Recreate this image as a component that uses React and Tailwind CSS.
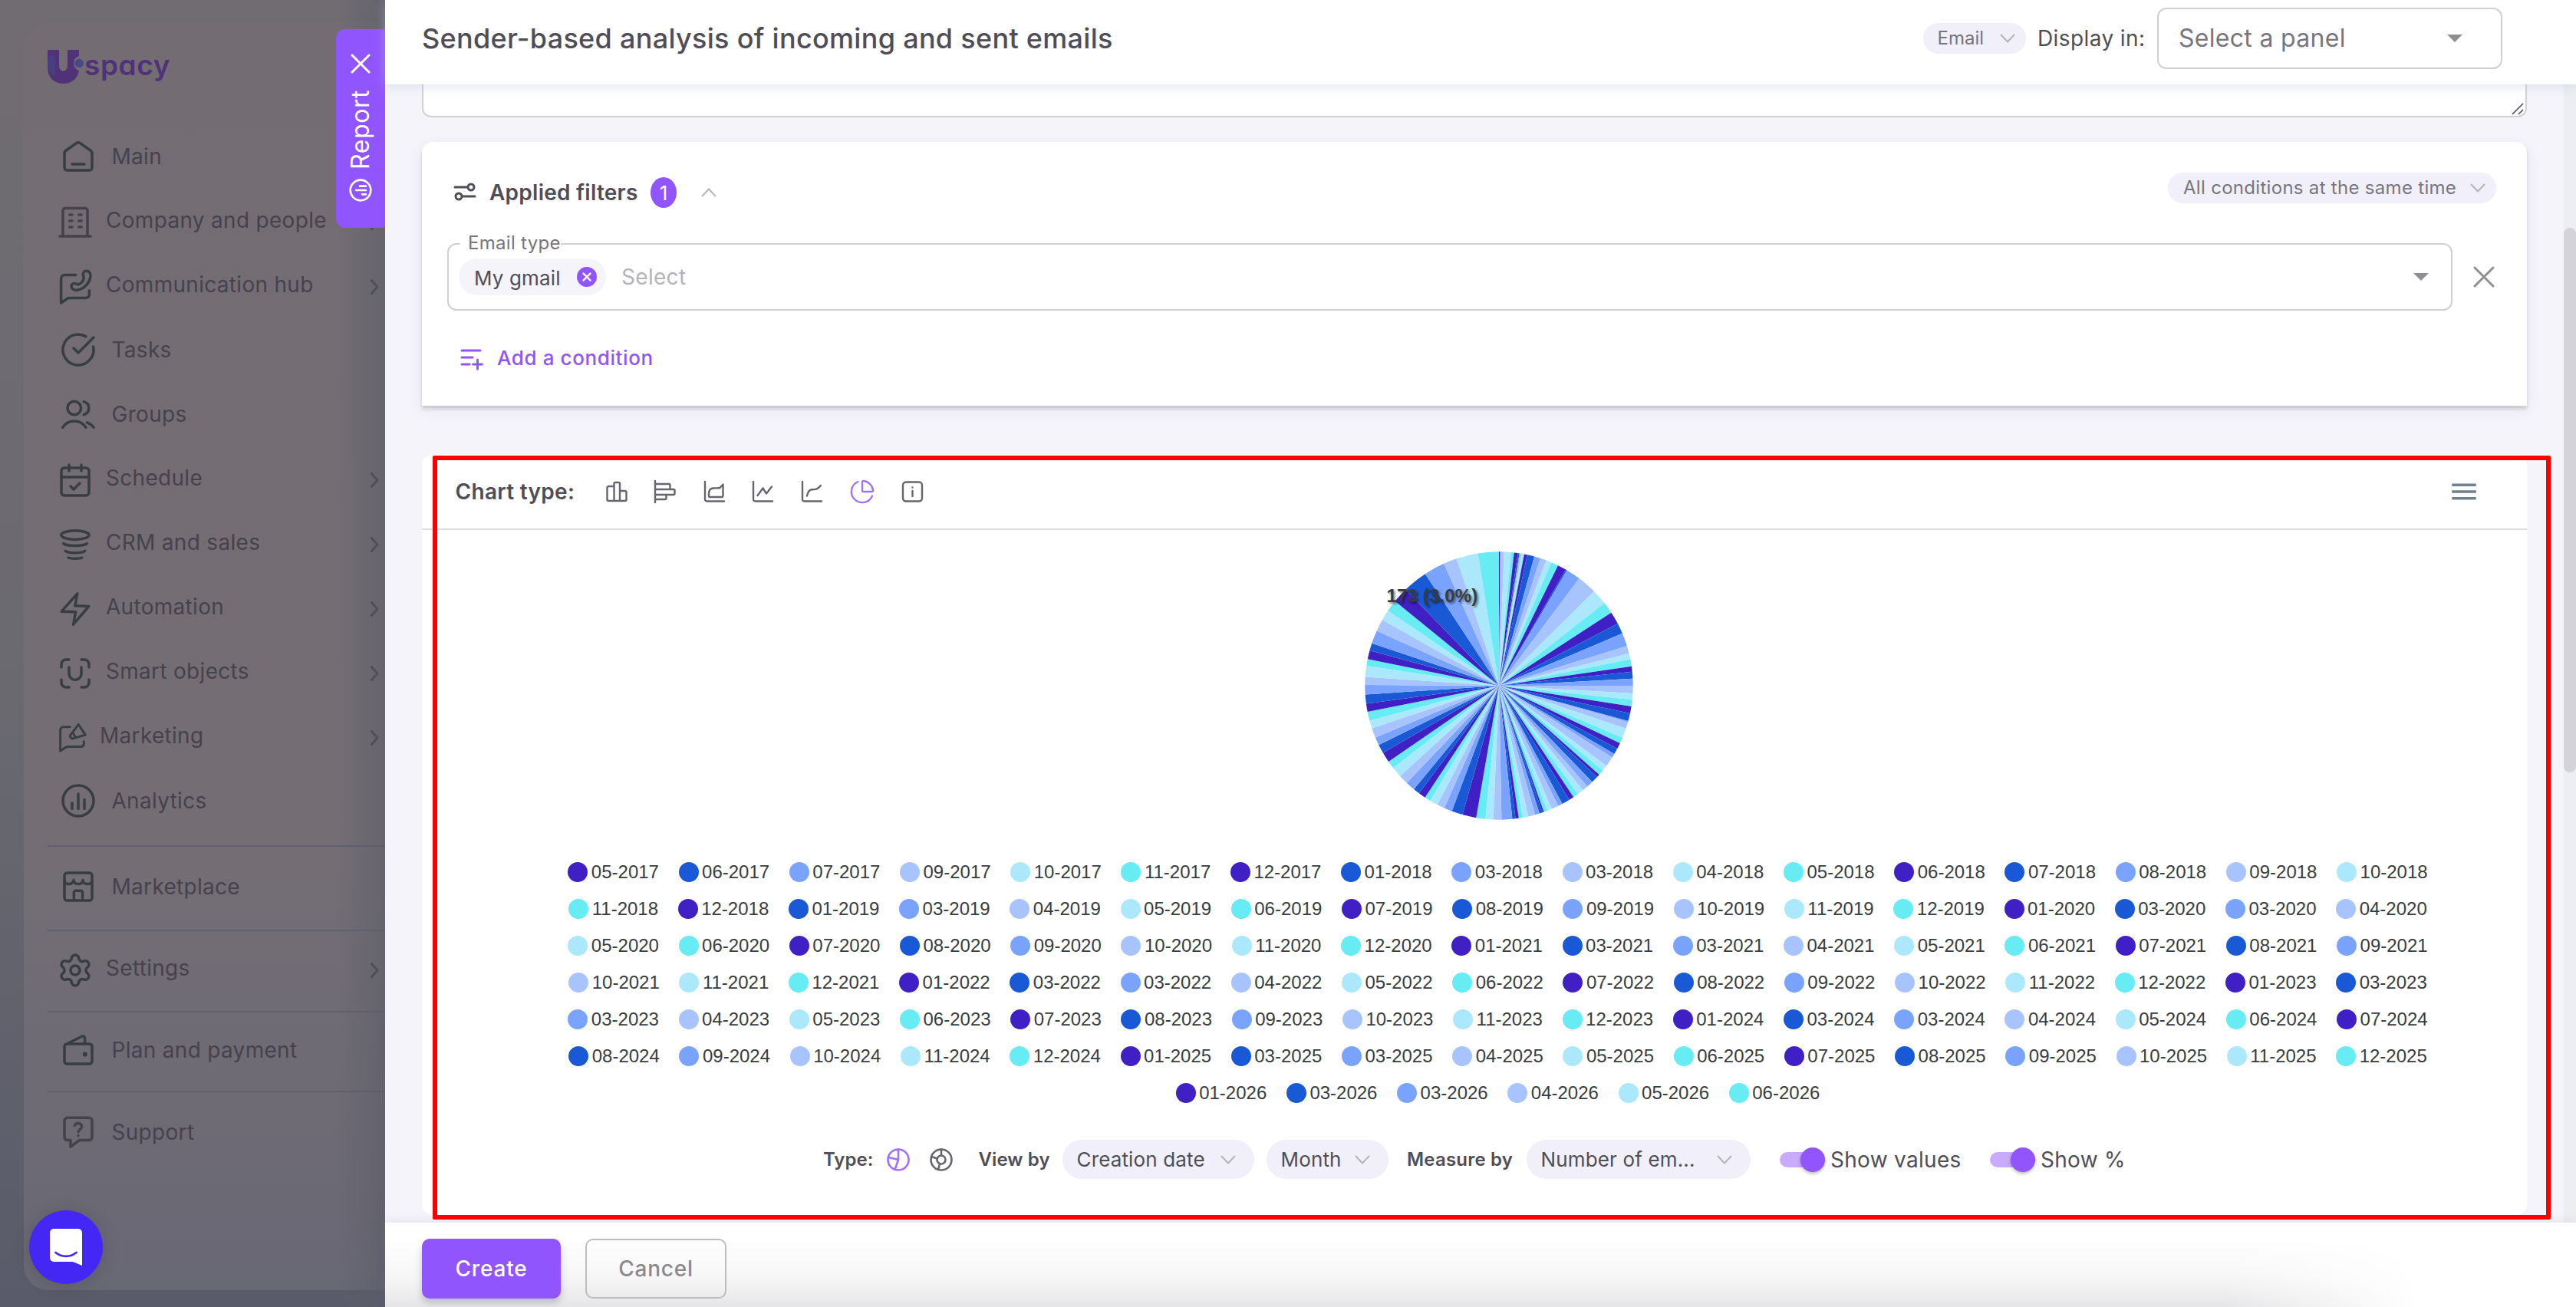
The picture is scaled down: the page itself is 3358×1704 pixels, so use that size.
import { CalendarCheck, ChartPie, CircleCheckBig, Settings } from "lucide-react"

const COLORS = ["#4020c4", "#1a59d6", "#7aa3ff", "#a8c4ff", "#abe8fc", "#66ecf2"]

const PERIODS = `
05-2017 06-2017 07-2017 09-2017 10-2017 11-2017 12-2017 01-2018 03-2018 03-2018 04-2018 05-2018 06-2018 07-2018 08-2018 09-2018 10-2018
11-2018 12-2018 01-2019 03-2019 04-2019 05-2019 06-2019 07-2019 08-2019 09-2019 10-2019 11-2019 12-2019 01-2020 03-2020 03-2020 04-2020
05-2020 06-2020 07-2020 08-2020 09-2020 10-2020 11-2020 12-2020 01-2021 03-2021 03-2021 04-2021 05-2021 06-2021 07-2021 08-2021 09-2021
10-2021 11-2021 12-2021 01-2022 03-2022 03-2022 04-2022 05-2022 06-2022 07-2022 08-2022 09-2022 10-2022 11-2022 12-2022 01-2023 03-2023
03-2023 04-2023 05-2023 06-2023 07-2023 08-2023 09-2023 10-2023 11-2023 12-2023 01-2024 03-2024 03-2024 04-2024 05-2024 06-2024 07-2024
08-2024 09-2024 10-2024 11-2024 12-2024 01-2025 03-2025 03-2025 04-2025 05-2025 06-2025 07-2025 08-2025 09-2025 10-2025 11-2025 12-2025
01-2026 03-2026 03-2026 04-2026 05-2026 06-2026`.trim().split(/\s+/)

// end angle of every slice, clockwise from 12 o'clock
const ANGLES = [
  0.5, 0.53, 0.6, 2.2, 5.15, 6.5,
  8.1, 8.8, 9.1, 9.7, 10.5, 10.9,
  12.2, 15.3, 18, 20.7, 23, 26.15,
  29.9, 30.5, 36.8, 45.2, 51.9, 56.95,
  62.4, 67, 72.8, 76.1, 78.6, 81.7,
  84, 87, 90, 93.3, 96, 98.9,
  101.9, 105.3, 105.8, 108.7, 112.8, 115.4,
  118, 120.6, 122.4, 126.7, 129.2, 131.6,
  132.9, 135.9, 138.8, 141.3, 143.9, 146.2,
  148.3, 151.8, 153.8, 156.8, 158.8, 160.4,
  161.1, 162.4, 164.4, 167.4, 169.8, 171.5,
  172.9, 174.3, 178.9, 182.4, 185.8, 189.8,
  195.8, 200.6, 204.1, 207.4, 210.9, 213.5,
  216.6, 219.4, 223.5, 227.6, 232.1, 235.5,
  239.9, 243.8, 247.3, 251.5, 254.9, 258.8,
  262.3, 266.2, 270.3, 273.8, 278.6, 281.5,
  285.3, 288.4, 294.2, 299.5, 304, 309.1,
  315.8, 326.6, 335.7, 341.6, 351, 360,
]

function Glyph({ size = 48, box = 24, sw = 1.75, className = "", children }) {
  return (
    <svg
      width={size}
      height={size}
      viewBox={`0 0 ${box} ${box}`}
      fill="none"
      stroke="currentColor"
      strokeWidth={sw}
      strokeLinecap="round"
      strokeLinejoin="round"
      className={`shrink-0 ${className}`}
    >
      {children}
    </svg>
  )
}

const Home = () => (
  <Glyph>
    <path d="M3 10.2c0-.9.4-1.7 1.1-2.2l6.7-4.7c.7-.5 1.7-.5 2.4 0L19.9 8c.7.5 1.1 1.3 1.1 2.2v9a1.8 1.8 0 0 1-1.8 1.8H4.8A1.8 1.8 0 0 1 3 19.2z" />
    <path d="M8 17h8" />
  </Glyph>
)

const Building = () => (
  <Glyph className="text-[#45424c]">
    <path d="M2 21h20M4 21V4.3a1.5 1.5 0 0 1 1.5-1.5h13a1.5 1.5 0 0 1 1.5 1.5V21" />
    <path d="M8.3 7h1.7M14.4 7h1.7M8.3 11h1.7M14.4 11h1.7M8.3 15h1.7M14.4 15h1.7" />
  </Glyph>
)

const Hub = () => (
  <Glyph>
    <path d="M12.3 4.3H5.2a2.4 2.4 0 0 0-2.4 2.4v15.8l3.8-2.7c.5-.4.9-.5 1.5-.5h10.7c1.4 0 2.4-1 2.4-2.4v-2.5" />
    <path d="M17.4 5.2c-.8-1.8.2-3.6 2-3.6 2 .1 2.9 1.9 2.5 4.2-.7 3.8-4.2 7.5-8.1 8.2-2.2.4-4-.5-4.3-2.1-.3-1.6 1.5-2.6 2.9-2 .7.4 1.1.7 1.7.5 1.5-.5 3-2 3.4-3.6.1-.6.1-1-.1-1.6z" />
  </Glyph>
)

const People = () => (
  <Glyph>
    <circle cx="9.4" cy="8" r="4.4" />
    <path d="M15.6 3.8c2 .5 3.3 2.1 3.3 4.2s-1.3 3.8-3.3 4.3" />
    <path d="M1.8 20.6c1.8-2.7 4.5-4.1 7.6-4.1s5.8 1.4 7.6 4.1M17.7 17.4c1.8.6 3.3 1.7 4.4 3.2" />
  </Glyph>
)

const Funnel = () => (
  <Glyph>
    <ellipse cx="12" cy="5.8" rx="9.1" ry="2.9" />
    <path d="M4.3 11.3c2.2 1.9 13.2 1.9 15.4 0M5.7 16.2c2 1.6 10.6 1.6 12.6 0M7.6 20.5c1.5.8 7.3.8 8.8 0" />
  </Glyph>
)

const Bolt = () => (
  <Glyph>
    <path d="M13.4 1.9 3.1 13.6l9.2.3-1.5 8.2L20.9 10.2l-9-.3z" />
  </Glyph>
)

const SmartU = () => (
  <Glyph>
    <path d="M3 8V6a3 3 0 0 1 3-3h2M16 3h2a3 3 0 0 1 3 3v2M21 16v2a3 3 0 0 1-3 3h-2M8 21H6a3 3 0 0 1-3-3v-2" />
    <path d="M8 8v4.2a4 4 0 0 0 8 0V8" />
  </Glyph>
)

const Promo = () => (
  <Glyph size={40}>
    <path d="M10.3 3.4H5.2a2.4 2.4 0 0 0-2.4 2.4v16.5l4-2.8c.5-.4 1-.6 1.6-.6h10.4c1.5 0 2.4-1 2.4-2.4v-1.7" />
    <path d="M17 1.5 22.4 9.7l-9 2.5a1.9 1.9 0 0 1-2.3-3zM12.8 8.2l1.7 3.3" />
  </Glyph>
)

const Bars = ({ size = 48, sw = 1.75, className = "" }) => (
  <Glyph size={size} sw={sw} className={className}>
    <circle cx="12" cy="12" r="10" />
    <path d="M8 13.5v3.7M12 7.5v9.7M16 11.3v5.9" />
  </Glyph>
)

const Shop = () => (
  <Glyph>
    <rect x="3" y="3" width="18" height="18" rx="1.8" />
    <path d="M3 8c.3 1.5 1.4 2.3 2.9 2.3S9 9.2 9 7.6c0 1.6 1.2 2.7 3 2.7s3-1.1 3-2.7c0 1.6 1.4 2.7 3.1 2.7S20.7 9.5 21 8" />
    <path d="M9.2 20.8V15.8a1.2 1.2 0 0 1 1.2-1.2h3.2a1.2 1.2 0 0 1 1.2 1.2v5" />
  </Glyph>
)

const Wallet = () => (
  <Glyph>
    <rect x="3" y="8" width="18" height="13" rx="1.8" />
    <path d="M4.5 8 14.3 3.1c1-.5 2 .1 2 1.2V8" />
    <circle cx="16.4" cy="14.7" r="0.9" fill="currentColor" strokeWidth="1.2" />
  </Glyph>
)

const Help = () => (
  <Glyph className="text-[#45424c]">
    <path d="M5 2.6h14a2 2 0 0 1 2 2v10.7a2 2 0 0 1-2 2h-6.3L7 21.5V17.3H5a2 2 0 0 1-2-2V4.6a2 2 0 0 1 2-2z" />
    <path d="M9.7 7.7a2.4 2.4 0 0 1 4.6.8c0 1.6-2.3 2-2.3 3.4M12 14.3v.1" />
  </Glyph>
)

const lucide = { size: 48, strokeWidth: 1.75, className: "shrink-0" }

const NAV = [
  { label: "Main", icon: <Home /> },
  { label: "Company and people", icon: <Building />, sub: true },
  { label: "Communication hub", icon: <Hub />, sub: true },
  { label: "Tasks", icon: <CircleCheckBig {...lucide} /> },
  { label: "Groups", icon: <People /> },
  { label: "Schedule", icon: <CalendarCheck {...lucide} />, sub: true },
  { label: "CRM and sales", icon: <Funnel />, sub: true },
  { label: "Automation", icon: <Bolt />, sub: true },
  { label: "Smart objects", icon: <SmartU />, sub: true },
  { label: "Marketing", icon: <Promo />, sub: true },
  { label: "Analytics", icon: <Bars /> },
]

function NavItem({ item, className }) {
  const { label, icon, sub } = item
  return (
    <div className={`flex items-center ${sub ? "pl-[74px]" : "pl-[78px]"} pr-2 ${className}`}>
      <span className={`flex text-[#373e42] ${sub ? "pt-1" : ""}`}>{icon}</span>
      <span className={`text-[28px] leading-[34px] tracking-[0.3px] text-[#45424c] ${sub ? "-mt-[2px] pl-[16px]" : "pl-[19.5px]"}`}>
        {label}
      </span>
      {sub && (
        <svg width="12" height="22" viewBox="0 0 12 22" className="ml-auto mt-1" fill="none" stroke="#45424c" strokeWidth="3">
          <path d="M1.5 1.5 10 11 1.5 20.5" />
        </svg>
      )}
    </div>
  )
}

const Line = () => <div className="ml-[62px] h-[2px] bg-[#5f6070]" />

function Sidebar() {
  return (
    <aside className="relative h-full w-[502px] shrink-0 overflow-hidden bg-linear-to-b from-[#706c72] via-[#6b6a70] to-[#595b6a] pt-[30px] pb-[22px]">
      <div className="flex h-full">
        <div className="ml-[31px] h-full w-full rounded-l-[32px] bg-linear-to-b from-[#736d73] via-[#746e74] via-65% to-[#696875]">
          <div className="-ml-[31px] flex flex-col">
            <div className="flex h-[132px] items-start pl-[62px] pt-[35px]">
              <svg width="50" height="46" viewBox="0 0 50 46" className="shrink-0">
                <path d="M0 0h15v20c0 10 11 10 11 0V0h15v8a10 10 0 0 0 0 19c-2 11-10 17-20.5 17C8.5 44 0 36 0 23z" fill="#4f3277" />
                <path d="M0 12c0-6 10-6 10 0v22C3 31 0 27 0 22z" fill="#46427f" opacity=".8" />
                <circle cx="41" cy="17.5" r="5.8" fill="#474a85" />
              </svg>
              <span className="-mt-[2px] -ml-[2px] text-[37px] leading-[44px] font-semibold tracking-[0.6px] text-[#4f3277] [font-feature-settings:'cv11']">spacy</span>
            </div>
            {NAV.map((item) => (
              <NavItem key={item.label} item={item} className="h-[84px]" />
            ))}
            <div className="h-4" />
            <Line />
            <NavItem item={{ label: "Marketplace", icon: <Shop /> }} className="mb-1 h-[104px]" />
            <Line />
            <NavItem item={{ label: "Settings", icon: <Settings {...lucide} />, sub: true }} className="mb-[6px] h-[98px]" />
            <Line />
            <NavItem item={{ label: "Plan and payment", icon: <Wallet /> }} className="mb-1 h-[98px]" />
            <Line />
            <NavItem item={{ label: "Support", icon: <Help /> }} className="h-[104px]" />
          </div>
        </div>
      </div>
      <div className="absolute inset-y-0 right-0 w-[64px] bg-linear-to-r from-transparent to-[#5c5d68]/60" />
      {/* report tab */}
      <div className="absolute top-[38px] right-0 flex h-[259px] w-16 flex-col items-center rounded-l-[12px] bg-[#9155fd] pt-8 text-white">
        <Glyph size={26} box={26} sw={3}>
          <path d="m2 2 22 22M24 2 2 24" />
        </Glyph>
        <span className="mt-[21px] h-[104px] rotate-180 text-[32px] leading-[40px] tracking-[0.6px] [writing-mode:vertical-rl]">Report</span>
        <Bars size={32} sw={2} className="mt-[11px] -rotate-90" />
      </div>
      {/* messenger launcher */}
      <div className="absolute top-[1578px] left-[38px] flex size-24 items-center justify-center rounded-full bg-[#4527f5] shadow-[0_2px_24px_rgba(0,0,0,0.15)]">
        <svg width="42" height="48" viewBox="0 0 42 48">
          <path d="M5 0h32a5 5 0 0 1 5 5v43l-12-5H5a5 5 0 0 1-5-5V5a5 5 0 0 1 5-5z" fill="#fff" />
          <path d="M7.5 31c8 6.5 19 6.5 27 0" fill="none" stroke="#4527f5" strokeWidth="2.8" strokeLinecap="round" />
        </svg>
      </div>
    </aside>
  )
}

function Caret({ up = false, className = "" }) {
  return (
    <svg width="20" height="12" viewBox="0 0 20 12" fill="none" stroke="#b4b4b8" strokeWidth="2" className={`shrink-0 ${className}`}>
      <path d={up ? "M1 11 10 1.5 19 11" : "m1 1 9 9.5L19 1"} />
    </svg>
  )
}

function Arrow({ className = "" }) {
  return (
    <svg width="20" height="10" viewBox="0 0 20 10" className={`shrink-0 ${className}`}>
      <path d="M0 0h20L10 10z" fill="#8f8e93" />
    </svg>
  )
}

function Header() {
  return (
    <header className="relative z-10 flex h-[110px] shrink-0 items-center bg-white pr-24 pb-[10px] pl-12 shadow-[0_2px_14px_rgba(180,190,225,0.45)]">
      <h1 className="text-[36px] leading-[44px] font-medium tracking-[0.3px] text-[#4f4e58]">
        Sender-based analysis of incoming and sent emails
      </h1>
      <div className="ml-auto flex h-10 w-[134px] items-center justify-between rounded-full bg-[#f0effa] pr-[14px] pl-[18.5px] text-[24px] text-[#77767c]">
        Email
        <Caret />
      </div>
      <span className="w-[157px] shrink-0 pl-[15px] text-[28px] tracking-[0.4px] whitespace-nowrap text-[#4f4e58]">Display in:</span>
      <div className="ml-[14px] flex h-20 w-[450px] items-center justify-between rounded-[12px] border-2 border-[#d0d0d2] pr-[50px] pl-[26px] text-[32px] tracking-[0.3px] text-[#77767c]">
        Select a panel
        <Arrow />
      </div>
    </header>
  )
}

function Filters() {
  return (
    <section className="mt-8 flex h-[344px] flex-col rounded-t-[14px] bg-white pl-[33px] shadow-[0_4px_4px_rgba(60,60,80,0.2),0_6px_20px_rgba(60,60,90,0.08)]">
      <div className="mt-[40px] flex h-[52px] items-start pr-10">
        <Glyph size={30} box={30} sw={3} className="mt-[10px] ml-[8px] text-[#4f4e58]">
          <path d="M2 9h16M12 21h16" />
          <circle cx="23" cy="9" r="4" />
          <circle cx="7" cy="21" r="4" />
        </Glyph>
        <span className="mt-[11px] w-[212px] pl-[17px] text-[28px] leading-[30px] font-semibold tracking-[0.25px] whitespace-nowrap text-[#4f4e58]">Applied filters</span>
        <span className="mt-[6px] ml-[15px] flex h-10 w-[34px] items-center justify-center rounded-[50%] bg-[#9155fd] text-[26px] text-white">1</span>
        <Caret up className="mt-[20px] ml-[32px]" />
        <div className="ml-auto flex h-10 w-[428px] items-center justify-between rounded-full bg-[#f0effa] pr-[14px] pl-[20px] text-[24px] tracking-[0.3px] text-[#77767c]">
          All conditions at the same time
          <Caret />
        </div>
      </div>
      <div className="mt-[40px] flex items-center">
        <div className="relative flex h-[88px] w-[2614px] items-center rounded-[12px] border-2 border-[#d0d0d2] pr-[29px] pl-[13px]">
          <span className="absolute -top-[17px] left-[15px] bg-white pl-[10px] text-[24px] leading-[30px] tracking-[0.3px] text-[#77767c]">Email type</span>
          <div className="flex h-12 w-[192px] items-center justify-between rounded-full bg-[#f5f4fb] pr-[12px] pl-[20px] text-[26px] tracking-[0.15px] text-[#4f4e58]">
            <span className="pt-[2px]">My gmail</span>
            <span className="flex size-[26px] items-center justify-center rounded-full bg-[#9155fd] text-white">
              <Glyph size={12} box={12} sw={2.4}>
                <path d="m1.5 1.5 9 9M10.5 1.5l-9 9" />
              </Glyph>
            </span>
          </div>
          <span className="ml-[20px] text-[28px] tracking-[0.3px] text-[#b4b4b8]">Select</span>
          <Arrow className="ml-auto" />
        </div>
        <Glyph size={28} box={28} sw={3} className="ml-[27px] text-[#8f8e93]">
          <path d="m2 2 24 24M26 2 2 26" />
        </Glyph>
      </div>
      <div className="mt-[45px] flex items-center text-[#9155fd]">
        <Glyph size={32} box={32} sw={3} className="ml-[17px]">
          <path d="M2 6h24M2 15h14M2 24h10M16.5 24h12M22.5 18v12" />
        </Glyph>
        <span className="ml-[16px] text-[26px] leading-[34px] font-medium tracking-[0.6px]">Add a condition</span>
      </div>
    </section>
  )
}

const AXIS = "M4 3v23a2.5 2.5 0 0 0 2.5 2.5H29"

const CHART_ICONS = [
  <path key="bar" d="M12.5 9H5.5a2 2 0 0 0-2 2v15a2 2 0 0 0 2 2h21a2 2 0 0 0 2-2V17a2 2 0 0 0-2-2H20M12.5 28V5.5a1.5 1.5 0 0 1 1.5-1.5h4.5A1.5 1.5 0 0 1 20 5.5V28" />,
  <path key="hbar" d="M3 2v28M3 6h18a1.5 1.5 0 0 1 1.5 1.5V13M3 13h24a1.5 1.5 0 0 1 1.5 1.5v4A1.5 1.5 0 0 1 27 20H3M17.5 20v4.5A1.5 1.5 0 0 1 16 26H3" />,
  <g key="area">
    <path d={AXIS} />
    <path d="M9 22v-3.5c0-4 1.5-6.5 5.5-7 4-.3 8 .3 9.5-1L27.5 6.5V21a2 2 0 0 1-2 2h-15.5a1 1 0 0 1-1-1z" />
  </g>,
  <g key="line">
    <path d={AXIS} />
    <path d="m9.5 21 7-9.5L21 18.5 28 9.5" />
  </g>,
  <g key="spline">
    <path d={AXIS} />
    <path d="M10 21.5c1-5 2.5-8 6.5-8.3 3-.2 5 .2 7-1.2 2-1.3 3.2-2.5 4.3-4" />
  </g>,
]

function polar(deg) {
  const rad = ((deg - 90) * Math.PI) / 180
  return `${175 + 174.7 * Math.cos(rad)} ${175 + 174.7 * Math.sin(rad)}`
}

function Pie() {
  return (
    <svg width="350" height="350" viewBox="0 0 350 350" className="mt-7 overflow-visible">
      {ANGLES.map((end, i) => (
        <path key={i} d={`M175 175L${polar(i ? ANGLES[i - 1] : 0)}A174.7 174.7 0 0 1 ${polar(end)}Z`} fill={COLORS[i % 6]} />
      ))}
      <text
        x="28.5"
        y="66"
        className="text-[24px] font-bold tracking-[0.15px] [font-family:'Liberation_Sans',Arial,sans-serif] [text-shadow:2px_2px_3px_rgba(0,0,0,0.5)]"
        fill="#373d3f"
      >
        173 (3.0%)
      </text>
    </svg>
  )
}

function Pill({ className, children }) {
  return (
    <div className={`flex h-[51px] shrink-0 items-center justify-between rounded-full bg-[#f0effa] pr-[24px] pl-[18.5px] text-[26px] tracking-[0.15px] whitespace-nowrap text-[#4f4e58] ${className}`}>
      {children}
      <Caret />
    </div>
  )
}

function Toggle({ label, className }) {
  return (
    <div className={`flex shrink-0 items-center ${className}`}>
      <span className="relative h-5 w-[56px] rounded-full bg-[#c8aafe]">
        <span className="absolute -top-[6px] right-[-3px] size-8 rounded-full bg-[#9155fd] shadow-[0_2px_4px_rgba(0,0,0,0.3)]" />
      </span>
      <span className="pl-[10px] text-[28px] tracking-[0.3px] whitespace-nowrap text-[#4f4e58]">{label}</span>
    </div>
  )
}

function Controls() {
  return (
    <div className="mt-[37px] flex h-[51px] items-center self-stretch pl-[459px] text-[24px] font-semibold text-[#4f4e58]">
      <span className="w-[83px] shrink-0">Type:</span>
      <Glyph size={30} box={30} sw={2.6} className="text-[#9f70fc]">
        <circle cx="15" cy="15" r="13.5" />
        <path d="M15 1.5V15L10.5 28M15 15 2.5 12" />
      </Glyph>
      <Glyph size={30} box={30} sw={2.6} className="ml-[26px] text-[#66656f]">
        <circle cx="15" cy="15" r="13.5" />
        <circle cx="15" cy="15" r="5.5" />
        <path d="M15 1.5v8M9.5 13.5 2.5 11M13 20.5 11 28" />
      </Glyph>
      <span className="ml-[33.5px] w-[109.5px] shrink-0 tracking-[0.1px] whitespace-nowrap">View by</span>
      <Pill className="w-[250px] font-normal">Creation date</Pill>
      <Pill className="ml-[16px] w-[159px] font-normal">Month</Pill>
      <span className="ml-[24px] w-[156px] shrink-0 tracking-[0.2px] whitespace-nowrap">Measure by</span>
      <Pill className="w-[292px] font-normal">Number of em...</Pill>
      <Toggle label="Show values" className="ml-[38px] w-[274px] font-normal" />
      <Toggle label="Show %" className="font-normal" />
    </div>
  )
}

function ChartCard() {
  return (
    <section className="mt-16 h-[991px] rounded-[14px] bg-white">
      <div className="flex h-[98px] items-center border-b-2 border-[#dcdce0] pl-[43.5px] text-[#66656f]">
        <span className="w-[194px] text-[28px] font-semibold tracking-[0.3px] text-[#4f4e58]">Chart type:</span>
        <div className="flex items-center gap-[31.5px]">
          {CHART_ICONS.map((icon) => (
            <Glyph key={icon.key} size={32} box={32} sw={2.4}>
              {icon}
            </Glyph>
          ))}
          <ChartPie size={34} strokeWidth={1.6} className="ml-[1.5px] text-[#9f70fc]" />
          <Glyph size={32} box={32} sw={2.4} className="ml-[1.5px]">
            <rect x="3" y="3.5" width="25" height="25" rx="4" />
            <path d="M15.5 15v7M15.5 10.5v.1" />
          </Glyph>
        </div>
        <svg width="42" height="42" viewBox="0 0 24 24" fill="#6e8192" className="mr-[61px] ml-auto">
          <path d="M3 18h18v-2H3v2zm0-5h18v-2H3v2zm0-7v2h18V6H3z" />
        </svg>
      </div>
      <div className="flex flex-col items-center pl-16">
        <Pie />
        <div className="mt-[44px] mr-[3px] flex w-[2460px] flex-wrap justify-center gap-x-[25.65px] text-[24px] text-[#373d3f] [font-family:'Liberation_Sans',Arial,sans-serif]">
          {PERIODS.map((period, i) => (
            <span key={i} className="flex h-12 items-center">
              <span className="mr-[4.5px] size-[26px] rounded-full" style={{ background: COLORS[i % 6] }} />
              {period}
            </span>
          ))}
        </div>
        <Controls />
      </div>
    </section>
  )
}

export default function App() {
  return (
    <div className="relative flex h-[1704px] w-[3358px] overflow-hidden bg-[#6b6a70] [font-family:Inter,sans-serif]">
      <Sidebar />
      <main className="flex h-full min-w-0 flex-1 flex-col bg-[#f5f4fb]">
        <Header />
        <div className="flex h-[1484px] shrink-0">
          <div className="w-[2840px] shrink-0 pr-12 pl-12">
            <div className="relative h-[43px] rounded-b-[12px] border-2 border-t-0 border-[#d0d0d2] bg-white">
              <svg width="16" height="16" viewBox="0 0 16 16" className="absolute right-[2px] bottom-[1px]" stroke="#4f4e58" strokeWidth="1.6">
                <path d="M1 15 15 1M9 15l6-6" />
              </svg>
            </div>
            <Filters />
            <ChartCard />
          </div>
          <div className="h-full w-4 bg-[#eceeef] pt-[187px]">
            <div className="h-[710px] rounded-full bg-[#d4d4d8]" />
          </div>
        </div>
        <footer className="relative flex h-[110px] shrink-0 items-start gap-8 bg-white bg-[linear-gradient(to_bottom,#ffffff_20%,#f6f6f7_65%,#e6e6e8_100%)] pt-[21px] pl-12 text-[28px] font-medium tracking-[0.8px] shadow-[0_-3px_12px_rgba(120,120,180,0.12)]">
          <div className="absolute inset-y-0 right-0 w-[460px] bg-linear-to-r from-transparent to-white to-55%" />
          <button className="h-[78px] w-[181px] rounded-[10px] bg-[#9155fd] text-white shadow-[0_6px_10px_rgba(60,60,80,0.25)]">Create</button>
          <button className="h-[78px] w-[184px] rounded-[10px] border-2 border-[#bdbdc0] text-[#8a898e]">Cancel</button>
        </footer>
      </main>
      {/* highlight frame */}
      <div className="pointer-events-none absolute top-[594px] left-[564px] z-20 h-[996px] w-[2761px] rounded-[2px] border-[6px] border-[#ff0000]" />
    </div>
  )
}
